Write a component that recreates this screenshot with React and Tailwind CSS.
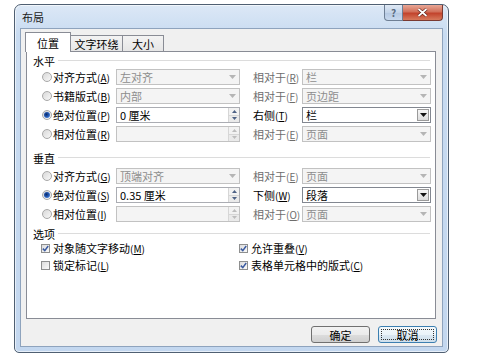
import React from "react";

const Arrow = ({ color = "#000" }) => (
  <svg width="7" height="4" viewBox="0 0 7 4">
    <path d="M0 0h7L3.5 4z" fill={color} />
  </svg>
);
const Up = ({ color = "#000" }) => (
  <svg width="5" height="3" viewBox="0 0 5 3">
    <path d="M0 3h5L2.5 0z" fill={color} />
  </svg>
);
const Down = ({ color = "#000" }) => (
  <svg width="5" height="3" viewBox="0 0 5 3">
    <path d="M0 0h5L2.5 3z" fill={color} />
  </svg>
);

function Radio({ checked }) {
  return (
    <span className="w-[10px] h-[10px] shrink-0 rounded-full border border-[#a8a8a8] bg-[linear-gradient(135deg,#d8d8d8,#f8f8f8)] flex items-center justify-center">
      {checked && (
        <span className="w-[6px] h-[6px] rounded-full bg-[radial-gradient(circle_at_40%_40%,#0b2a66_0%,#2a63c2_55%,#7fb3ea_100%)]" />
      )}
    </span>
  );
}

function Check({ checked }) {
  return (
    <span className="w-[9px] h-[9px] shrink-0 border border-[#8e8f8f] bg-[linear-gradient(135deg,#dcdcdc,#fafafa)] flex items-center justify-center">
      {checked && (
        <svg width="7" height="7" viewBox="0 0 7 7">
          <path d="M0.8 3.6L2.8 5.6L6.2 1" stroke="#3a5aa0" strokeWidth="1.5" fill="none" />
        </svg>
      )}
    </span>
  );
}

function Acc({ text, k, after = "" }) {
  return (
    <span>
      {text}
      <span className="text-[10px]">
        (<span className="underline">{k}</span>)
      </span>
      {after}
    </span>
  );
}

function Select({ value, enabled, wide }) {
  return (
    <div
      className={
        (wide ? "w-[129px] " : "w-[124px] ") +
        "h-[16px] shrink-0 flex items-center border " +
        (enabled ? "border-[#828790] bg-white text-black" : "border-[#c2c2c2] bg-[#f4f4f4] text-[#8d8d8d]")
      }
    >
      <span className="flex-1 pl-[3px] leading-[14px]">{value}</span>
      {enabled ? (
        <span className="w-[12px] h-[12px] mr-[1px] border border-[#9a9a9a] bg-[linear-gradient(#f6f6f6,#dcdcdc)] flex items-center justify-center">
          <Arrow color="#111" />
        </span>
      ) : (
        <span className="w-[12px] h-[12px] mr-[1px] flex items-center justify-center">
          <Arrow color="#b5b5b5" />
        </span>
      )}
    </div>
  );
}

function Spin({ value, enabled }) {
  return (
    <div
      className={
        "w-[124px] h-[16px] shrink-0 flex items-center border " +
        (enabled ? "border-[#abadb3] bg-white text-black" : "border-[#c2c2c2] bg-[#f4f4f4] text-[#8d8d8d]")
      }
    >
      <span className="flex-1 pl-[3px] leading-[14px]">{value}</span>
      <span className="w-[11px] h-[14px] flex flex-col border-l border-[#d6d6d6]">
        <span className="flex-1 flex items-center justify-center border-b border-[#d6d6d6] bg-[#f2f2f2]">
          <Up color={enabled ? "#4d6185" : "#bdbdbd"} />
        </span>
        <span className="flex-1 flex items-center justify-center bg-[#eaeaea]">
          <Down color={enabled ? "#4d6185" : "#bdbdbd"} />
        </span>
      </span>
    </div>
  );
}

function GroupHead({ title, cls }) {
  return (
    <div className={"flex items-center pl-[6px] pr-[5px] " + cls}>
      <span className="text-black">{title}</span>
      <span className="flex-1 ml-[3px] h-[2px] border-t border-[#dcdcdc] border-b border-b-white" />
    </div>
  );
}

function Row({ checked, label, field, relLabel, relEnabled, relValue }) {
  return (
    <div className="h-[19px] flex items-start pl-[15px]">
      <div className="h-[16px] flex items-center">
        <Radio checked={checked} />
      </div>
      <div className="w-[64px] h-[16px] pl-[1px] flex items-center text-black whitespace-nowrap">{label}</div>
      {field}
      <div
        className={
          "w-[62px] h-[16px] pl-[13px] flex items-center whitespace-nowrap " +
          (relEnabled ? "text-black" : "text-[#6d6d6d]")
        }
      >
        {relLabel}
      </div>
      <Select value={relValue} enabled={relEnabled} wide />
    </div>
  );
}

export default function App() {
  return (
    <div className="w-[489px] h-[359px] bg-white pt-[4px] pl-[14px] font-['Noto_Sans_CJK_SC','Noto_Sans',sans-serif] text-[11px] leading-[14px]">
      <div className="w-[435px] h-[349px] rounded-t-[7px] rounded-b-[5px] border border-[#4f5f72] bg-[linear-gradient(#dce8f6,#c8dbf1_30px,#c3d7ef)] flex flex-col px-[5px] pb-[5px] shadow-[inset_0_0_0_1px_rgba(255,255,255,0.6)]">
        {/* Title bar */}
        <div className="h-[23px] flex items-start shrink-0">
          <span className="ml-[2px] mt-[5px] text-[#1b1b1b] text-[11px]">布局</span>
          <div className="ml-auto flex">
            <div className="w-[19px] h-[16px] rounded-bl-[4px] border border-t-0 border-[#6e7f95] bg-[linear-gradient(#dfe9f5,#c3d4e9_50%,#b4c8e2_51%,#c8d9ee)] flex items-center justify-center text-[#5a6a80] text-[10px] font-bold">
              ?
            </div>
            <div className="w-[40px] h-[16px] rounded-br-[4px] border border-l-0 border-t-0 border-[#7a3a32] bg-[linear-gradient(#e9a796,#d1705a_45%,#c2432c_55%,#d77a5c)] flex items-center justify-center">
              <svg width="11" height="9" viewBox="0 0 11 9">
                <path d="M1.5 1L9.5 8M9.5 1L1.5 8" stroke="#5a1d14" strokeWidth="3" />
                <path d="M1.5 1L9.5 8M9.5 1L1.5 8" stroke="#fff" strokeWidth="1.7" />
              </svg>
            </div>
          </div>
        </div>

        {/* Content */}
        <div className="flex-1 border border-[#8ea3bd] bg-[#f0f0f0] flex flex-col pl-[5px] pt-[3px]">
          {/* Tabs */}
          <div className="flex items-end h-[20px]">
            <div className="relative z-10 -ml-[1px] w-[46px] h-[20px] border border-b-0 border-[#898c95] bg-white flex items-center justify-center text-black">
              位置
            </div>
            <div className="w-[52px] h-[17px] border border-l-0 border-[#898c95] bg-[linear-gradient(#f3f3f3,#e6e6e6)] flex items-center justify-center text-black">
              文字环绕
            </div>
            <div className="w-[41px] h-[17px] border border-l-0 border-[#898c95] bg-[linear-gradient(#f3f3f3,#e6e6e6)] flex items-center justify-center text-black">
              大小
            </div>
          </div>
          {/* Panel */}
          <div className="-mt-px w-[410px] h-[268px] border border-[#898c95] bg-white flex flex-col">
            <GroupHead title="水平" cls="h-[17px]" />
            <Row
              label={<Acc text="对齐方式" k="A" />}
              field={<Select value="左对齐" />}
              relLabel={<Acc text="相对于" k="R" />}
              relValue="栏"
            />
            <Row
              label={<Acc text="书籍版式" k="B" />}
              field={<Select value="内部" />}
              relLabel={<Acc text="相对于" k="F" />}
              relValue="页边距"
            />
            <Row
              checked
              label={<Acc text="绝对位置" k="P" />}
              field={<Spin value="0 厘米" enabled />}
              relLabel={<Acc text="右侧" k="T" />}
              relEnabled
              relValue="栏"
            />
            <Row
              label={<Acc text="相对位置" k="R" />}
              field={<Spin value="" />}
              relLabel={<Acc text="相对于" k="E" />}
              relValue="页面"
            />
            <GroupHead title="垂直" cls="h-[17px] mt-[4px]" />
            <div className="h-[2px]" />
            <Row
              label={<Acc text="对齐方式" k="G" />}
              field={<Select value="顶端对齐" />}
              relLabel={<Acc text="相对于" k="E" />}
              relValue="页面"
            />
            <Row
              checked
              label={<Acc text="绝对位置" k="S" />}
              field={<Spin value="0.35 厘米" enabled />}
              relLabel={<Acc text="下侧" k="W" />}
              relEnabled
              relValue="段落"
            />
            <Row
              label={<Acc text="相对位置" k="I" />}
              field={<Spin value="" />}
              relLabel={<Acc text="相对于" k="O" />}
              relValue="页面"
            />
            <GroupHead title="选项" cls="h-[16px] mt-[1px]" />
            <div className="flex flex-col pl-[14px] -mt-[2px]">
              <div className="h-[17px] flex items-center">
                <div className="w-[198px] flex items-center">
                  <Check checked />
                  <span className="ml-[3px] text-black"><Acc text="对象随文字移动" k="M" /></span>
                </div>
                <div className="flex items-center">
                  <Check checked />
                  <span className="ml-[3px] text-black"><Acc text="允许重叠" k="V" /></span>
                </div>
              </div>
              <div className="h-[17px] flex items-center">
                <div className="w-[198px] flex items-center">
                  <Check />
                  <span className="ml-[3px] text-black"><Acc text="锁定标记" k="L" /></span>
                </div>
                <div className="flex items-center">
                  <Check checked />
                  <span className="ml-[3px] text-black"><Acc text="表格单元格中的版式" k="C" /></span>
                </div>
              </div>
            </div>
          </div>
          {/* Buttons */}
          <div className="mt-[7px] w-[411px] flex justify-end gap-[8px]">
            <div className="w-[59px] h-[17px] rounded-[3px] border border-[#707070] bg-[linear-gradient(#f2f2f2,#ebebeb_50%,#dddddd_51%,#cfcfcf)] flex items-center justify-center text-black">
              确定
            </div>
            <div className="w-[59px] h-[17px] rounded-[3px] border border-[#3c7fb1] bg-[linear-gradient(#f4f9fc,#eaf3f9_50%,#dbe8f2_51%,#cfdfeb)] p-[2px]">
              <div className="w-full h-full border border-dotted border-[#333] flex items-center justify-center text-black">
                取消
              </div>
            </div>
          </div>
        </div>
      </div>
    </div>
  );
}
